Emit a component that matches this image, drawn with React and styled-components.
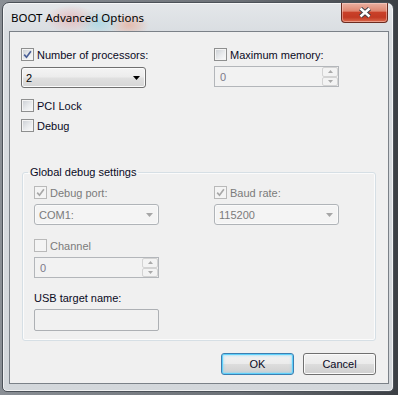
import React from 'react';
import styled, { createGlobalStyle } from 'styled-components';

const GlobalStyle = createGlobalStyle`
    html, body {
        margin: 0;
        padding: 0;
    }
    body {
        background: #4a4e54;
        font-family: "Noto Sans", "DejaVu Sans", sans-serif;
    }
`;

const Desktop = styled.div`
    width: 398px;
    height: 395px;
    box-sizing: border-box;
    padding: 2px 4px 3px 2px;
    display: flex;
    background: linear-gradient(90deg, #8a8f95 0%, #6c7177 60%, #3b3f44 100%);
`;

const Window = styled.div`
    flex: 1;
    display: flex;
    flex-direction: column;
    border: 1px solid #4b5158;
    border-radius: 7px 7px 5px 5px;
    box-shadow: inset 0 0 0 1px rgba(255, 255, 255, 0.65);
    background:
        radial-gradient(ellipse 26px 14px at 68px 16px, rgba(232, 160, 160, 0.55), transparent),
        radial-gradient(ellipse 22px 14px at 96px 20px, rgba(140, 210, 228, 0.55), transparent),
        radial-gradient(ellipse 20px 12px at 126px 22px, rgba(236, 150, 120, 0.5), transparent),
        linear-gradient(180deg, #e4e7ea 0px, #d9dde1 30px, #d3d7db 100%);
    overflow: hidden;
`;

const TitleBar = styled.div`
    height: 28px;
    display: flex;
    align-items: center;
    padding-left: 8px;
`;

const Title = styled.div`
    flex: 1;
    font-size: 11.5px;
    color: #000;
    white-space: nowrap;
    padding-top: 1px;
`;

const CloseButton = styled.div`
    align-self: flex-start;
    width: 47px;
    height: 20px;
    box-sizing: border-box;
    margin-right: 5px;
    border: 1px solid #6b2b20;
    border-top: none;
    border-radius: 0 0 4px 4px;
    background: linear-gradient(180deg, #eab1a2 0%, #df8670 42%, #c94029 50%, #c23a24 75%, #dc6a4d 100%);
    box-shadow: inset 0 0 0 1px rgba(255, 220, 210, 0.45);
    display: flex;
    align-items: center;
    justify-content: center;
`;

const Client = styled.div`
    flex: 1;
    margin: 0 4px 7px 6px;
    border: 1px solid #7b8188;
    background: #f0f0f0;
    padding: 16px 12px 0 11px;
    display: flex;
    flex-direction: column;
    font-family: "Liberation Sans", Arial, sans-serif;
    font-size: 11px;
    color: #000;
`;

const Columns = styled.div`
    display: grid;
    grid-template-columns: ${p => p.$left}px 1fr;
`;

const Column = styled.div`
    display: flex;
    flex-direction: column;
    align-items: flex-start;
`;

const CheckRow = styled.label`
    display: flex;
    align-items: center;
    gap: 3px;
    height: 13px;
    margin-top: ${p => p.$mt || 0}px;
    white-space: nowrap;
    color: ${p => (p.$disabled ? '#7b7b7b' : '#0a0a1e')};
`;

const Box = styled.span`
    width: 13px;
    height: 13px;
    box-sizing: border-box;
    flex-shrink: 0;
    border: 1px solid ${p => (p.$disabled ? '#b9b9b9' : '#8e8f8f')};
    background: ${p =>
        p.$disabled
            ? '#f4f4f4'
            : 'linear-gradient(135deg, #c9cdd2 0%, #e9ebed 55%, #fbfbfb 100%)'};
    box-shadow: inset 0 0 0 1px #f4f4f4;
    display: flex;
    align-items: center;
    justify-content: center;
`;

const Combo = styled.div`
    width: 125px;
    height: 21px;
    box-sizing: border-box;
    margin-top: ${p => p.$mt || 0}px;
    border: 1px solid ${p => (p.$disabled ? '#b0b4b8' : '#707070')};
    border-radius: 3px;
    background: ${p =>
        p.$disabled
            ? '#f4f4f4'
            : 'linear-gradient(180deg, #f4f4f4 0%, #ececec 48%, #e0e0e0 52%, #d6d6d6 100%)'};
    box-shadow: inset 0 0 0 1px ${p => (p.$disabled ? '#fafafa' : '#fbfbfb')};
    display: flex;
    align-items: center;
    padding: 0 5px 0 4px;
    color: ${p => (p.$disabled ? '#7b7b7b' : '#000')};
`;

const ComboText = styled.span`
    flex: 1;
`;

const SpinBox = styled.div`
    width: 125px;
    height: 21px;
    box-sizing: border-box;
    margin-top: ${p => p.$mt || 0}px;
    border: 1px solid #b3b6ba;
    background: #f2f2f2;
    display: flex;
    align-items: stretch;
    color: #7d7a8a;
`;

const SpinValue = styled.span`
    flex: 1;
    display: flex;
    align-items: center;
    padding-left: 5px;
`;

const SpinButtons = styled.div`
    width: 16px;
    display: flex;
    flex-direction: column;
`;

const SpinButton = styled.div`
    flex: 1;
    border: 1px solid #d3d3d3;
    border-radius: 2px;
    background: #f3f3f3;
    display: flex;
    align-items: center;
    justify-content: center;
`;

const Group = styled.fieldset`
    margin: 32px 0 0 1px;
    padding: 0;
    border: 1px solid #d6dfe5;
    border-radius: 3px;
    min-width: 0;
    box-shadow: inset 0 0 0 1px #fbfbfb;
`;

const Legend = styled.legend`
    margin-left: 5px;
    padding: 0 2px;
    line-height: 16px;
    color: #0a0a1e;
`;

const GroupBody = styled.div`
    padding: 6px 0 9px 11px;
    display: flex;
    flex-direction: column;
    align-items: flex-start;
`;

const FieldLabel = styled.div`
    margin-top: 12px;
    line-height: 16px;
    height: 16px;
    color: #0a0a1e;
`;

const Edit = styled.div`
    width: 125px;
    height: 22px;
    box-sizing: border-box;
    margin-top: 3px;
    border: 1px solid #adb0b4;
    border-radius: 2px;
    background: #f1f1f1;
`;

const ButtonRow = styled.div`
    display: flex;
    justify-content: flex-end;
    gap: 9px;
    margin-top: 12px;
`;

const Button = styled.div`
    width: 73px;
    height: 22px;
    box-sizing: border-box;
    border: 1px solid ${p => (p.$default ? '#3c7fb1' : '#707070')};
    border-radius: 3px;
    background: linear-gradient(180deg, #f2f2f2 0%, #ebebeb 50%, #dddddd 50%, #cfcfcf 100%);
    box-shadow: ${p =>
        p.$default
            ? 'inset 0 0 0 1px #5fd0fb, inset 0 0 2px 2px rgba(120, 215, 250, 0.45)'
            : 'inset 0 0 0 1px #fbfbfb'};
    display: flex;
    align-items: center;
    justify-content: center;
    color: #0a0a1e;
`;

const Check = ({ checked, disabled }) => (
    <Box $disabled={disabled}>
        {checked && (
            <svg width="9" height="9" viewBox="0 0 9 9">
                <path
                    d="M1.2 4.6 L3.5 7.2 L7.9 1.2"
                    fill="none"
                    stroke={disabled ? '#a8a8a8' : '#4a5f97'}
                    strokeWidth="1.7"
                />
            </svg>
        )}
    </Box>
);

const Arrow = ({ color, up, w = 7, h = 4 }) => (
    <svg width={w} height={h} viewBox={`0 0 ${w} ${h}`}>
        <polygon
            points={up ? `0,${h} ${w},${h} ${w / 2},0` : `0,0 ${w},0 ${w / 2},${h}`}
            fill={color}
        />
    </svg>
);

const Spin = ({ value, mt }) => (
    <SpinBox $mt={mt}>
        <SpinValue>{value}</SpinValue>
        <SpinButtons>
            <SpinButton>
                <Arrow up color="#a9a9a9" w={5} h={3} />
            </SpinButton>
            <SpinButton>
                <Arrow color="#a9a9a9" w={5} h={3} />
            </SpinButton>
        </SpinButtons>
    </SpinBox>
);

const App = () => {
    return (
        <Desktop>
            <GlobalStyle />
            <Window>
                <TitleBar>
                    <Title>BOOT Advanced Options</Title>
                    <CloseButton>
                        <svg width="14" height="11" viewBox="0 0 14 11">
                            <path d="M2.5 1.5 L11.5 9.5 M11.5 1.5 L2.5 9.5" stroke="#3d3d45" strokeWidth="4.4" />
                            <path d="M2.5 1.5 L11.5 9.5 M11.5 1.5 L2.5 9.5" stroke="#ffffff" strokeWidth="2.4" />
                        </svg>
                    </CloseButton>
                </TitleBar>
                <Client>
                    <Columns $left={193}>
                        <Column>
                            <CheckRow>
                                <Check checked />
                                Number of processors:
                            </CheckRow>
                            <Combo $mt={6}>
                                <ComboText>2</ComboText>
                                <Arrow color="#000" />
                            </Combo>
                            <CheckRow $mt={11}>
                                <Check />
                                PCI Lock
                            </CheckRow>
                            <CheckRow $mt={7}>
                                <Check />
                                Debug
                            </CheckRow>
                        </Column>
                        <Column>
                            <CheckRow>
                                <Check />
                                Maximum memory:
                            </CheckRow>
                            <Spin value="0" mt={5} />
                        </Column>
                    </Columns>

                    <Group>
                        <Legend>Global debug settings</Legend>
                        <GroupBody>
                            <Columns $left={180}>
                                <Column>
                                    <CheckRow $disabled>
                                        <Check checked disabled />
                                        Debug port:
                                    </CheckRow>
                                    <Combo $mt={5} $disabled>
                                        <ComboText>COM1:</ComboText>
                                        <Arrow color="#a6a6a6" />
                                    </Combo>
                                </Column>
                                <Column>
                                    <CheckRow $disabled>
                                        <Check checked disabled />
                                        Baud rate:
                                    </CheckRow>
                                    <Combo $mt={5} $disabled>
                                        <ComboText>115200</ComboText>
                                        <Arrow color="#a6a6a6" />
                                    </Combo>
                                </Column>
                            </Columns>
                            <CheckRow $mt={14} $disabled>
                                <Check disabled />
                                Channel
                            </CheckRow>
                            <Spin value="0" mt={5} />
                            <FieldLabel>USB target name:</FieldLabel>
                            <Edit />
                        </GroupBody>
                    </Group>

                    <ButtonRow>
                        <Button $default>OK</Button>
                        <Button>Cancel</Button>
                    </ButtonRow>
                </Client>
            </Window>
        </Desktop>
    );
};

export default App;
